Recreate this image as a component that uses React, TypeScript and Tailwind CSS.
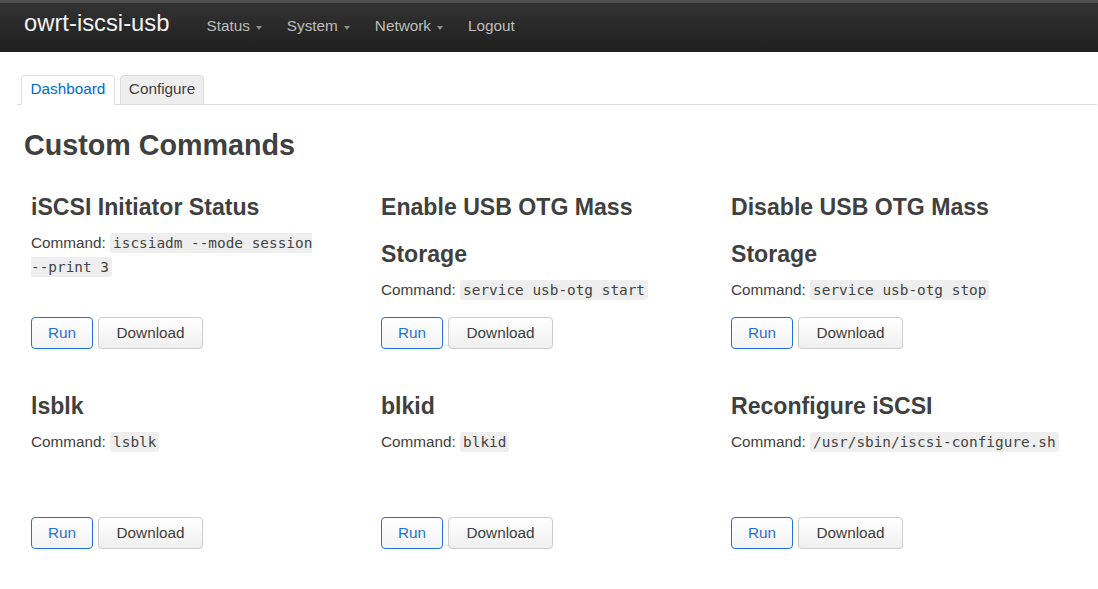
import React from "react";

type Cmd = { title: string; code: string };

const cmds: Cmd[] = [
  { title: "iSCSI Initiator Status", code: "iscsiadm --mode session --print 3" },
  { title: "Enable USB OTG Mass Storage", code: "service usb-otg start" },
  { title: "Disable USB OTG Mass Storage", code: "service usb-otg stop" },
  { title: "lsblk", code: "lsblk" },
  { title: "blkid", code: "blkid" },
  { title: "Reconfigure iSCSI", code: "/usr/sbin/iscsi-configure.sh" },
];

function Caret() {
  return (
    <span className="ml-[6px] inline-block h-0 w-0 translate-y-[1px] border-x-[3.5px] border-t-[4px] border-x-transparent border-t-[#8f8f8f] align-middle" />
  );
}

function NavItem({ label, caret }: { label: string; caret?: boolean }) {
  return (
    <a className="px-[12.5px] text-[15.3px] leading-[23px] text-[#bdbdbd]">
      {label}
      {caret && <Caret />}
    </a>
  );
}

function Code({ text }: { text: string }) {
  const words = text.split(" ");
  return (
    <code className="rounded-[3px] bg-[#eeeeee] px-[3px] py-[2px] font-['DejaVu_Sans_Mono',monospace] text-[14.4px] text-[#444444]">
      {words.map((w, i) => (
        <React.Fragment key={i}>
          <span className="whitespace-nowrap">{w}</span>
          {i < words.length - 1 ? " " : ""}
        </React.Fragment>
      ))}
    </code>
  );
}

function Card({ c }: { c: Cmd }) {
  return (
    <div className="flex flex-col pl-[14px]">
      <h3 className="text-[23.1px] font-bold leading-[47px] text-[#404040]">{c.title}</h3>
      <p className="text-[15.3px] leading-[23px] text-[#404040]">
        Command: <Code text={c.code} />
      </p>
      <div className="mt-auto flex gap-[5px] pt-[15.5px]">
        <button className="rounded-[4px] border border-[#1f73d6] bg-gradient-to-b from-white to-[#f3f3f3] px-[16px] py-[4px] text-[15.3px] leading-[22px] text-[#1f73d6]">
          Run
        </button>
        <button className="rounded-[4px] border border-[#cccccc] bg-gradient-to-b from-white to-[#efefef] px-[17.5px] py-[4px] text-[15.3px] leading-[22px] text-[#404040]">
          Download
        </button>
      </div>
    </div>
  );
}

export default function App() {
  return (
    <div className="min-h-screen bg-white font-['Liberation_Sans',Arial,sans-serif] text-[#404040]">
      <header className="flex h-[52px] items-baseline border-t-[3px] border-[#4e4e4e] bg-gradient-to-b from-[#333333] to-[#1f1f1f] px-[24px] pt-[5px]">
        <span className="mr-[24.5px] text-[23.8px] leading-[30px] text-[#f2f2f2]">owrt-iscsi-usb</span>
        <nav className="flex items-baseline">
          <NavItem label="Status" caret />
          <NavItem label="System" caret />
          <NavItem label="Network" caret />
          <NavItem label="Logout" />
        </nav>
      </header>

      <main className="pl-[17px] pr-[1px]">
        <div className="mt-[23px] flex gap-[5px] border-b border-[#dddddd] pl-[4px]">
          <div className="-mb-px rounded-t-[4px] border border-[#dddddd] border-b-white bg-white px-[8.5px] pb-[4px] pt-[1px] text-[15.3px] leading-[23px] text-[#0069d6]">
            Dashboard
          </div>
          <div className="-mb-px rounded-t-[4px] border border-[#dddddd] bg-[#eeeeee] px-[8px] pb-[4px] pt-[1px] text-[15.3px] leading-[23px] text-[#404040]">
            Configure
          </div>
        </div>

        <h2 className="ml-[7px] mt-[22.5px] text-[28.7px] font-bold leading-[34px] text-[#404040]">Custom Commands</h2>

        <div className="mt-[22px] grid auto-rows-fr grid-cols-[repeat(3,350px)] gap-y-[34px]">
          {cmds.map((c) => (
            <Card key={c.title} c={c} />
          ))}
        </div>
      </main>
    </div>
  );
}
